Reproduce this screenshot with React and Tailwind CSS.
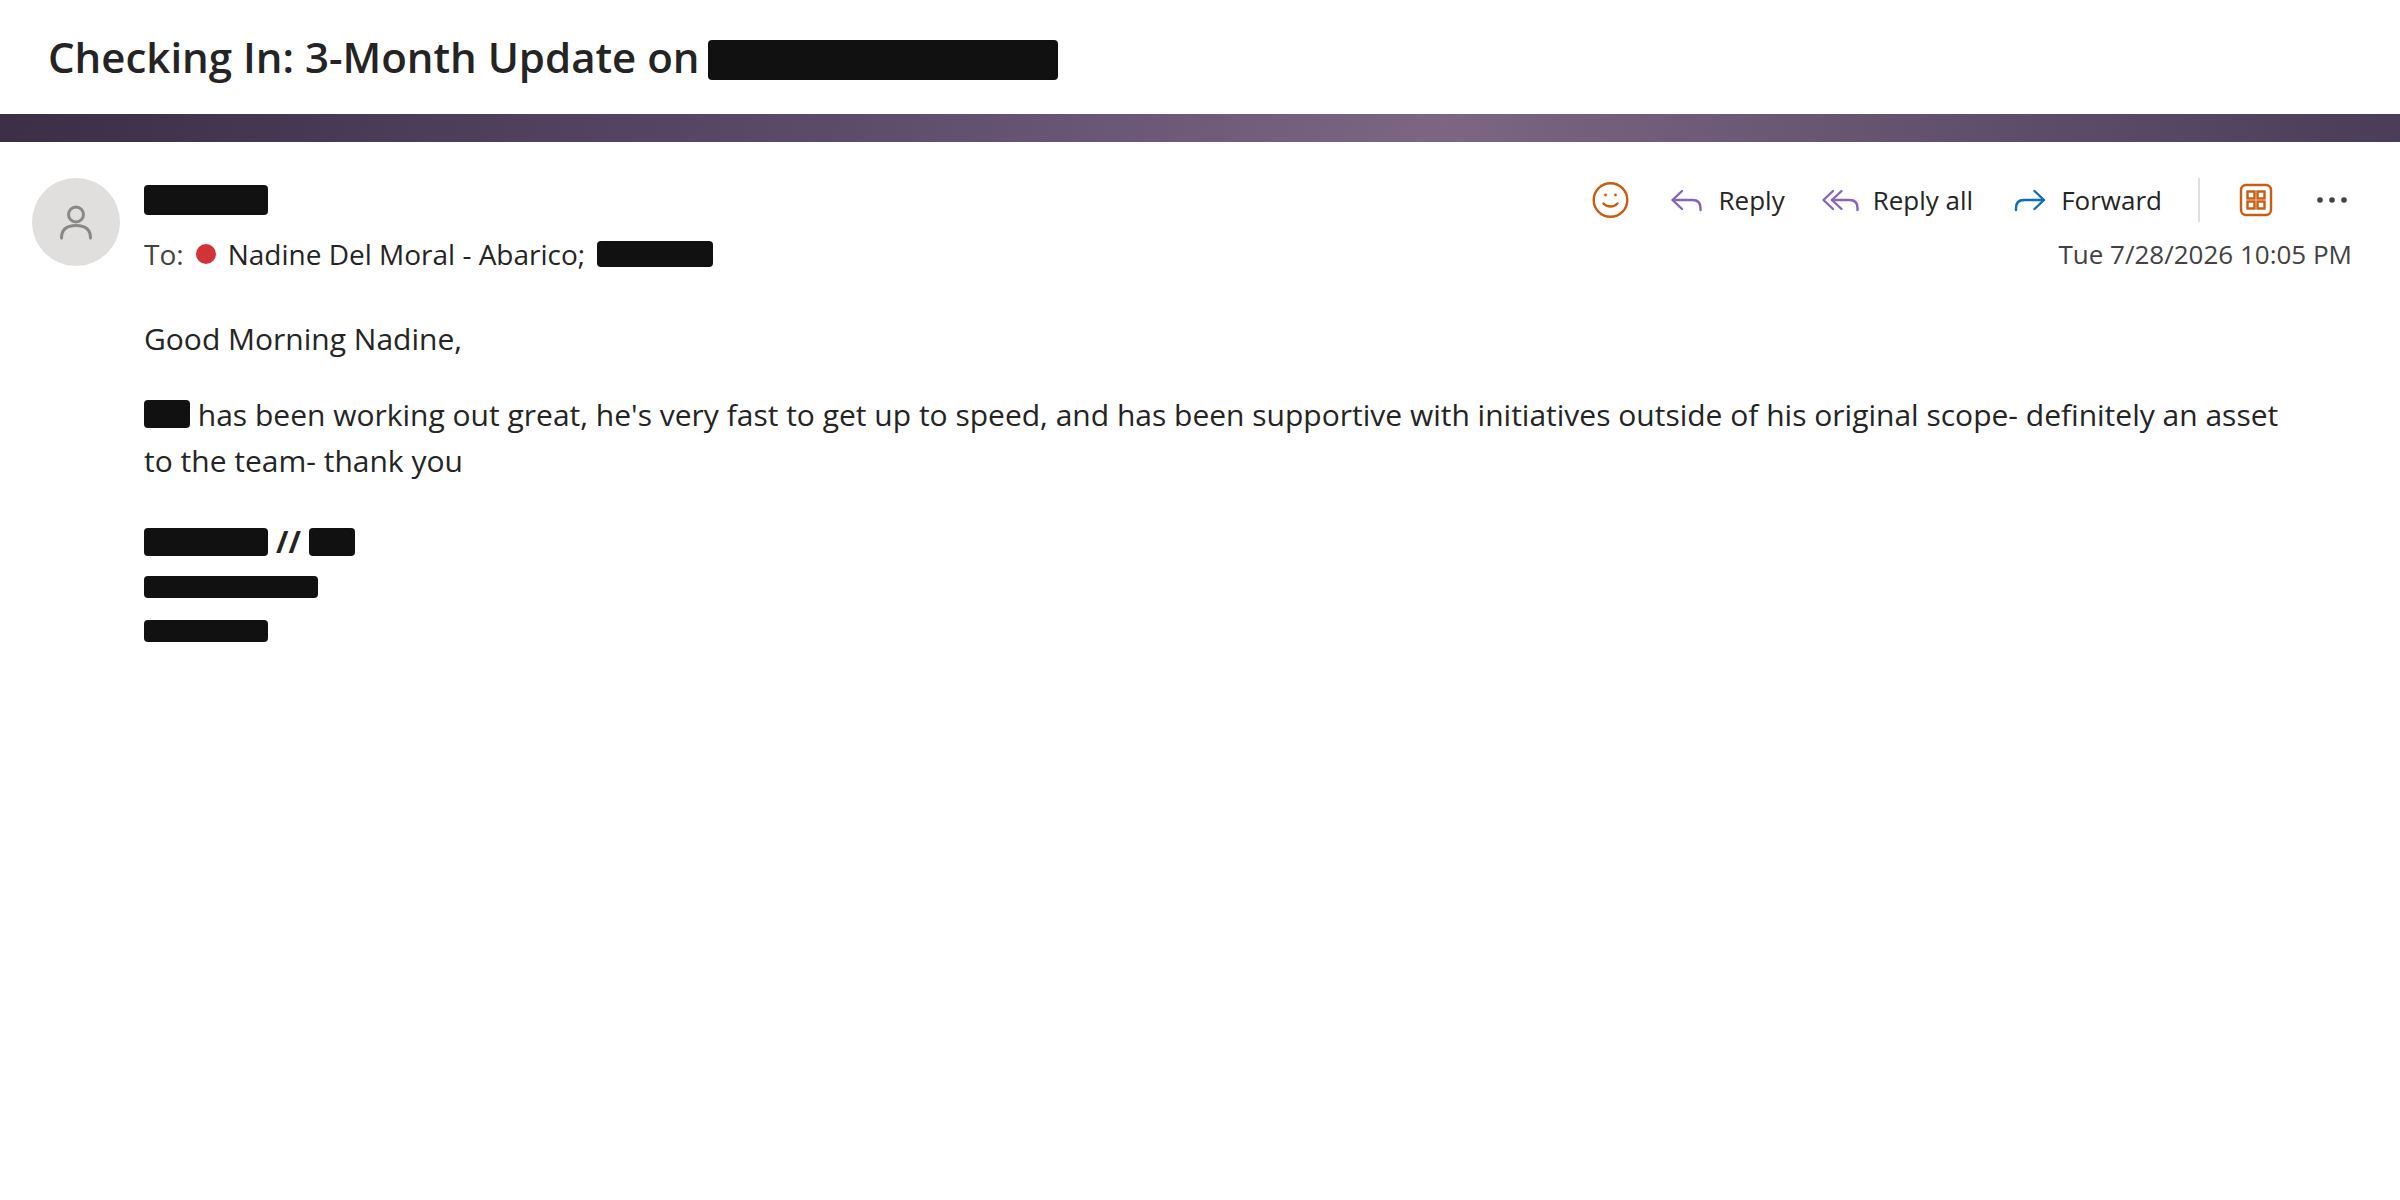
const ACTIONS = [
  { id: 'reply', label: 'Reply', color: 'text-[#8764b8]', paths: ['M15 11 5.500 20l9.500 9', 'M6 20h19.500c5 0 8 3 8 8v2'] },
  { id: 'reply-all', label: 'Reply all', color: 'text-[#8764b8]', paths: ['M12 11 2.500 20l9.500 9', 'M20.500 11 11 20l9.500 9', 'M11 20h17.500c5 0 8 3 8 8v2'] },
  { id: 'forward', label: 'Forward', color: 'text-[#0f6cbd]', paths: ['M25.500 11 35 20l-9.500 9', 'M34.500 20H15c-5 0-8 3-8 8v2'] },
];

function Redacted({ className }) {
  return <span className={`inline-block rounded bg-[#111111] ${className}`} aria-label="Redacted" role="img" />;
}

function Icon({ className, children }) {
  return (
    <svg
      viewBox="0 0 40 40"
      className={`size-10 shrink-0 ${className}`}
      fill="none"
      stroke="currentColor"
      strokeWidth="2.4"
      strokeLinecap="round"
      strokeLinejoin="round"
      aria-hidden="true"
    >
      {children}
    </svg>
  );
}

function Avatar() {
  return (
    <div className="flex size-22 shrink-0 items-center justify-center rounded-full bg-[#e1dfdd] text-[#8a8886]">
      <svg viewBox="0 0 44 44" className="size-11" fill="none" stroke="currentColor" strokeWidth="3" strokeLinecap="round" aria-hidden="true">
        <circle cx="22" cy="14.5" r="7.5" />
        <path d="M7.5 38c0-8.500 5-12.500 14.500-12.500S36.500 29.500 36.500 38" />
      </svg>
    </div>
  );
}

function Toolbar() {
  return (
    <div className="flex h-11 items-center gap-9">
      <button type="button" aria-label="React">
        <Icon className="text-[#ca5c12]">
          <circle cx="19.500" cy="20" r="16.800" />
          <path d="M12.500 23.500c3.500 4 10.500 4 14 0" />
          <circle cx="14.500" cy="15" r="1.400" fill="currentColor" stroke="none" />
          <circle cx="24.500" cy="15" r="1.400" fill="currentColor" stroke="none" />
        </Icon>
      </button>
      {ACTIONS.map(a => (
        <button key={a.id} type="button" className="flex items-center gap-3 whitespace-nowrap text-[26px] leading-9">
          <Icon className={a.color}>
            {a.paths.map(d => <path key={d} d={d} />)}
          </Icon>
          {a.label}
        </button>
      ))}
      <div className="h-11 w-0.5 bg-[#e1dfdd]" />
      <button type="button" aria-label="Apps">
        <Icon className="text-[#ca5c12]">
          <rect x="5" y="5" width="30" height="30" rx="5" />
          <g strokeLinejoin="miter">
            <rect x="11.500" y="11.500" width="7" height="7" />
            <rect x="21.500" y="11.500" width="7" height="7" />
            <rect x="11.500" y="21.500" width="7" height="7" />
            <rect x="21.500" y="21.500" width="7" height="7" />
          </g>
        </Icon>
      </button>
      <button type="button" aria-label="More actions">
        <Icon className="text-[#424242]">
          <g fill="currentColor" stroke="none">
            <circle cx="8" cy="20" r="2.800" />
            <circle cx="20" cy="20" r="2.800" />
            <circle cx="32" cy="20" r="2.800" />
          </g>
        </Icon>
      </button>
    </div>
  );
}

export default function App() {
  return (
    <div className="min-h-screen bg-white font-['Open_Sans',sans-serif] text-[#242424]">
      <header className="px-12 py-[30px]">
        <h1 className="flex items-end gap-2 text-[42px] leading-[54px] font-semibold">
          Checking In: 3-Month Update on
          <Redacted className="mb-1 h-10 w-[350px]" />
        </h1>
      </header>

      <div className="h-7 bg-[linear-gradient(100deg,#3b2e45_0%,#5c4b6b_35%,#7c6682_60%,#4a3d58_100%)]" />

      <main className="flex gap-6 pt-9 pr-12 pl-8">
        <Avatar />
        <div className="min-w-0 flex-1">
          {/* Sender + actions */}
          <div className="flex items-center justify-between">
            <Redacted className="h-[30px] w-[124px]" />
            <Toolbar />
          </div>

          {/* Recipients + date */}
          <div className="mt-3 flex h-10 items-center justify-between">
            <div className="flex items-center gap-3 text-[28px] leading-10">
              <span className="text-[#424242]">To:</span>
              <span className="size-5 rounded-full bg-[#d13438]" />
              <span>Nadine Del Moral - Abarico;</span>
              <Redacted className="h-[26px] w-[116px]" />
            </div>
            <time className="text-[26px] leading-9 text-[#424242]">Tue 7/28/2026 10:05 PM</time>
          </div>

          {/* Message */}
          <div className="mt-[42px] pr-12 text-[30px] leading-[46px]">
            <p>Good Morning Nadine,</p>
            <p className="mt-[30px]">
              <Redacted className="h-7 w-[46px] align-[-2px]" /> has been working out great, he's very fast to get up to
              speed, and has been supportive with initiatives outside of his original scope- definitely an asset to the
              team- thank you
            </p>
          </div>

          {/* Signature */}
          <div className="mt-9 flex flex-col items-start">
            <div className="flex h-11 items-center gap-2 text-[30px] leading-11 font-bold">
              <Redacted className="h-7 w-[124px]" />
              {'//'}
              <Redacted className="h-7 w-[46px]" />
            </div>
            <Redacted className="mt-3 h-[22px] w-[174px]" />
            <Redacted className="mt-[22px] h-[22px] w-[124px]" />
          </div>
        </div>
      </main>
    </div>
  );
}
